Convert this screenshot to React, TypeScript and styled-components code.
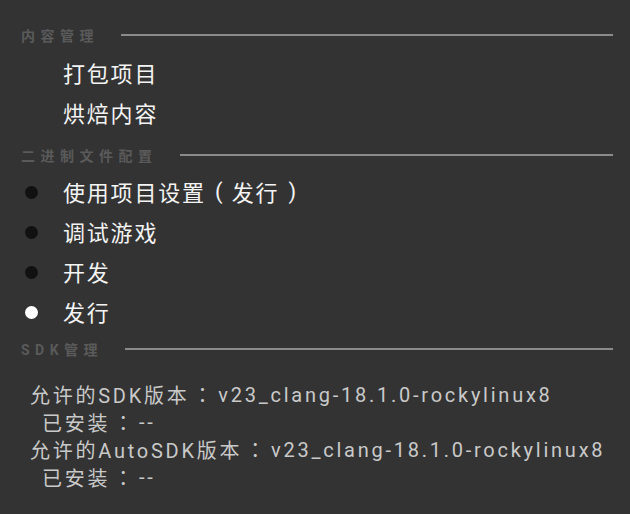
import React from "react";
import styled, { createGlobalStyle } from "styled-components";

const Global = createGlobalStyle`
  html, body {
    margin: 0;
    padding: 0;
    background: #333333;
  }
  body {
    font-family: Roboto, "Noto Sans CJK SC", sans-serif;
  }
`;

const Page = styled.div`
  width: 630px;
  height: 514px;
  box-sizing: border-box;
  padding: 22px 17px 0 21px;
  background: #333333;
  display: flex;
  flex-direction: column;
  overflow: hidden;
`;

const HeaderRow = styled.div<{ $top: number }>`
  display: flex;
  align-items: center;
  height: 26px;
  margin-top: ${(p) => p.$top}px;
`;

const HeaderTitle = styled.span`
  font-size: 14px;
  font-weight: 700;
  letter-spacing: 5.5px;
  color: #5a5a5a;
  white-space: nowrap;
`;

const Rule = styled.div`
  flex: 1;
  height: 2px;
  margin-left: 22px;
  background: #8b8b8b;
`;

const List = styled.div<{ $top: number }>`
  display: flex;
  flex-direction: column;
  margin-top: ${(p) => p.$top}px;
`;

const Item = styled.div`
  display: flex;
  align-items: center;
  height: 40px;
  padding-left: 42px;
  font-size: 22px;
  letter-spacing: 1.8px;
  color: #f4f4f4;
  white-space: nowrap;
`;

const RadioItem = styled.div`
  display: flex;
  align-items: center;
  height: 40px;
  font-size: 22px;
  letter-spacing: 1.8px;
  color: #f4f4f4;
  white-space: nowrap;
`;

const Dot = styled.span<{ $on: boolean }>`
  width: 13px;
  height: 13px;
  border-radius: 50%;
  margin-left: 4px;
  margin-right: 25px;
  margin-top: 2px;
  background: ${(p) => (p.$on ? "#ffffff" : "#111111")};
  flex-shrink: 0;
`;

const Paren = styled.span`
  display: inline-block;
  width: 26px;
  text-align: center;
  letter-spacing: 0;
  font-family: Roboto, sans-serif;
`;

const Colon = styled.span`
  font-family: "Noto Sans CJK TC", sans-serif;
  margin: 0 3px;
`;

const InfoLine = styled.div<{ $indent: number }>`
  height: 27.5px;
  display: flex;
  align-items: center;
  padding-left: ${(p) => p.$indent}px;
  font-size: 20px;
  letter-spacing: 2.75px;
  color: #c9c9c9;
  white-space: nowrap;
`;

const radios = [
  { label: <>使用项目设置<Paren>(</Paren>发行<Paren>)</Paren></>, on: false },
  { label: <>调试游戏</>, on: false },
  { label: <>开发</>, on: false },
  { label: <>发行</>, on: true },
];

export default function App() {
  return (
    <>
      <Global />
      <Page>
        <HeaderRow $top={0}>
          <HeaderTitle>内容管理</HeaderTitle>
          <Rule />
        </HeaderRow>
        <List $top={4}>
          <Item>打包项目</Item>
          <Item>烘焙内容</Item>
        </List>
        <HeaderRow $top={10}>
          <HeaderTitle>二进制文件配置</HeaderTitle>
          <Rule />
        </HeaderRow>
        <List $top={3}>
          {radios.map((r, i) => (
            <RadioItem key={i}>
              <Dot $on={r.on} />
              {r.label}
            </RadioItem>
          ))}
        </List>
        <HeaderRow $top={5}>
          <HeaderTitle>SDK管理</HeaderTitle>
          <Rule />
        </HeaderRow>
        <List $top={19}>
          <InfoLine $indent={9}>允许的SDK版本<Colon>：</Colon>v23_clang-18.1.0-rockylinux8</InfoLine>
          <InfoLine $indent={21}>已安装<Colon>：</Colon>--</InfoLine>
          <InfoLine $indent={9}>允许的AutoSDK版本<Colon>：</Colon>v23_clang-18.1.0-rockylinux8</InfoLine>
          <InfoLine $indent={21}>已安装<Colon>：</Colon>--</InfoLine>
        </List>
      </Page>
    </>
  );
}
